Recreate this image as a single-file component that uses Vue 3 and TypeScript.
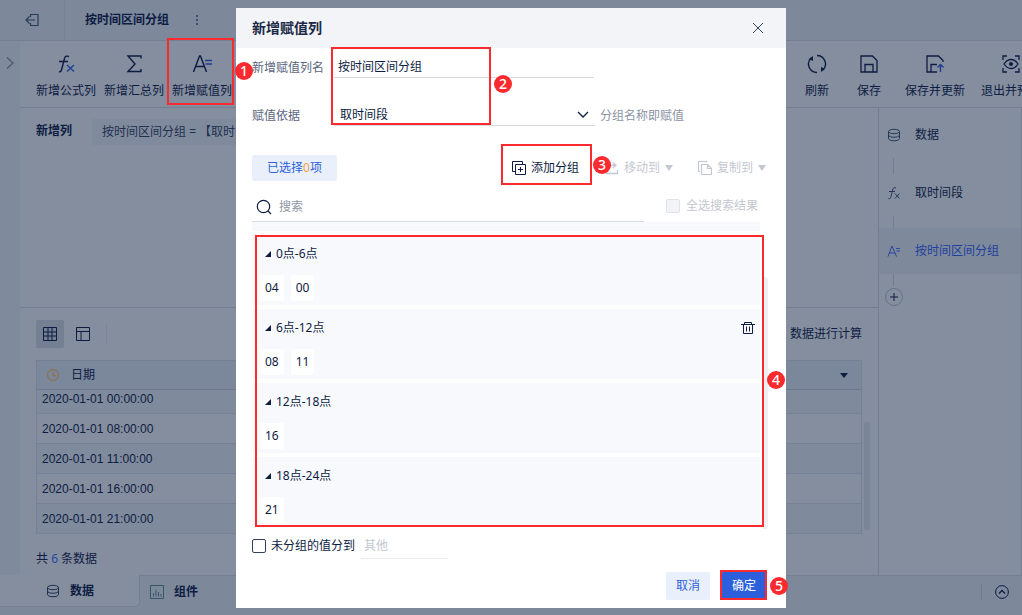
<script setup lang="ts">
import { ref } from 'vue'

interface Group {
  name: string
  values: string[]
  active?: boolean
}

const columnName = ref('按时间区间分组')
const basis = ref('取时间段')
const keyword = ref('')
const otherOn = ref(false)
const otherName = ref('')

const groups: Group[] = [
  { name: '0点-6点', values: ['04', '00'] },
  { name: '6点-12点', values: ['08', '11'], active: true },
  { name: '12点-18点', values: ['16'] },
  { name: '18点-24点', values: ['21'] },
]

const dates: string[] = [
  '2020-01-01 00:00:00',
  '2020-01-01 08:00:00',
  '2020-01-01 11:00:00',
  '2020-01-01 16:00:00',
  '2020-01-01 21:00:00',
]
</script>

<template>
  <div class="app">
    <header class="topbar">
      <button class="back" aria-label="返回">
        <svg width="14" height="14" viewBox="0 0 14 14"><path d="M5.500 4V1.500h7.500v11H5.500V10M1 7h9M4.500 3.500L1 7l3.500 3.500" stroke-width="1.200" /></svg>
      </button>
      <h1>按时间区间分组</h1>
      <button class="more" aria-label="更多">
        <svg width="4" height="12" viewBox="0 0 4 12"><path d="M1 2h2M1 6h2M1 10h2" stroke-width="1.600" /></svg>
      </button>
    </header>

    <div class="middle">
      <aside class="rail">
        <button aria-label="展开">
          <svg width="8" height="14" viewBox="0 0 8 14"><path d="M1 1.500L7 7l-6 5.500" stroke-width="1.200" /></svg>
        </button>
      </aside>
      <div class="work">
        <nav class="tools">
          <button>
            <svg width="20" height="20" viewBox="0 0 20 20"><path d="M13 2.500c-3-1-4 0-4.500 2L5.500 16c-.4 1.600-1 2-2.500 1.700M3 7.500h9" stroke-width="1.400" /><path class="accent" d="M11 11l7 6.500M18 11l-7 6.500" stroke-width="1.300" /></svg>
            <span>新增公式列</span>
          </button>
          <button>
            <svg width="20" height="20" viewBox="0 0 20 20"><path d="M17 4.500V2H4l7 8-7 7.500h13V15" stroke-width="1.400" /></svg>
            <span>新增汇总列</span>
          </button>
          <button>
            <svg width="20" height="20" viewBox="0 0 20 20"><path d="M1.500 18L7.500 2h1L14.500 18M4 12.500h8" stroke-width="1.400" /><path class="accent" d="M13 6.500h7M13.500 10H20" stroke-width="1.400" /></svg>
            <span>新增赋值列</span>
          </button>
          <div class="right-tools">
            <button>
              <svg width="20" height="20" viewBox="0 0 20 20"><path d="M10 1.500A8.500 8.500 0 0 1 16 16M10 18.500A8.500 8.500 0 0 1 4 4" stroke-width="1.400" /><path class="solid" d="M6 2v5L2 5zM14 18v-5l4 2z" /></svg>
              <span>刷新</span>
            </button>
            <button>
              <svg width="20" height="20" viewBox="0 0 20 20"><path d="M2 2h11.500L18 6.500V18H2zM6 18v-7.500h8V18" stroke-width="1.300" /></svg>
              <span>保存</span>
            </button>
            <button class="wide">
              <svg width="20" height="20" viewBox="0 0 20 20"><path d="M18 8V6.500L13.500 2H2v16h10M6 18v-7.500h6" stroke-width="1.300" /><path class="accent" d="M15.500 18v-7M12.500 13.500l3-3 3 3" stroke-width="1.400" /></svg>
              <span>保存并更新</span>
            </button>
            <button>
              <svg width="20" height="20" viewBox="0 0 20 20"><path d="M2 6V2h4M14 2h4v4M18 14v4h-4M6 18H2v-4M3 10c4-6 10-6 14 0-4 6-10 6-14 0z" stroke-width="1.300" /><circle cx="10" cy="10" r="2" class="solid" /></svg>
              <span>退出并预览</span>
            </button>
          </div>
        </nav>
        <div class="columns">
          <main>
            <section class="formula">
              <strong>新增列</strong>
              <span class="chip">按时间区间分组 = 【取时间段】</span>
            </section>
            <section class="preview">
              <div class="view-row">
                <button class="on" aria-label="明细表">
                  <svg width="16" height="16" viewBox="0 0 16 16"><path d="M1.500 1.500h13v13h-13zM1.500 6h13M1.500 10h13M6 1.500v13M10 1.500v13" /></svg>
                </button>
                <button aria-label="布局">
                  <svg width="16" height="16" viewBox="0 0 16 16"><path d="M1.500 1.500h13v13h-13zM1.500 5.500h13M6 5.500v9" /></svg>
                </button>
                <i class="sep"></i>
                <span class="calc">数据进行计算</span>
              </div>
              <div class="table-wrap">
                <table>
                  <thead>
                    <tr>
                      <th>
                        <div>
                          <svg class="clock" width="14" height="14" viewBox="0 0 14 14"><circle cx="7" cy="7" r="5.500" /><path d="M7 4v3.500h3" /></svg>
                          <span>日期</span>
                          <svg class="caret" width="8" height="5" viewBox="0 0 8 5"><path d="M0 0h8L4 5z" /></svg>
                        </div>
                      </th>
                    </tr>
                  </thead>
                  <tbody>
                    <tr v-for="d in dates" :key="d"><td>{{ d }}</td></tr>
                  </tbody>
                </table>
                <i class="page-scroll"></i>
              </div>
              <p class="count">共 <b>6</b> 条数据</p>
            </section>
          </main>
          <aside class="steps">
            <div class="step">
              <svg width="14" height="14" viewBox="0 0 14 14"><ellipse cx="7" cy="3.500" rx="5.500" ry="2.200" /><path d="M1.500 3.500v7c0 3 11 3 11 0v-7M1.500 7c0 3 11 3 11 0" /></svg>
              <span>数据</span>
            </div>
            <i class="link long"></i>
            <div class="step">
              <svg width="14" height="14" viewBox="0 0 14 14"><path d="M9 2C6.500 1 6 2.500 5.700 4L4 10.500C3.500 12.500 3 13 1.500 12.500M2 5.500h6M8 7.500l4.500 5M12.500 7.500l-4.500 5" /></svg>
              <span>取时间段</span>
            </div>
            <i class="link"></i>
            <div class="step current">
              <svg width="14" height="14" viewBox="0 0 14 14"><path d="M1 12.500L5 2l4.500 10.500M2.500 9H8M9 4.500h4M9.500 7H13" /></svg>
              <span>按时间区间分组</span>
            </div>
            <i class="link"></i>
            <button class="plus" aria-label="添加步骤">
              <svg width="10" height="10" viewBox="0 0 10 10"><path d="M5 1v8M1 5h8" /></svg>
            </button>
          </aside>
        </div>
      </div>
    </div>

    <footer class="bottom">
      <button class="tab selected">
        <svg width="14" height="14" viewBox="0 0 14 14"><ellipse cx="7" cy="3.500" rx="5.500" ry="2.200" /><path d="M1.500 3.500v7c0 3 11 3 11 0v-7M1.500 7c0 3 11 3 11 0" /></svg>
        <span>数据</span>
      </button>
      <button class="tab">
        <svg class="chart" width="14" height="14" viewBox="0 0 14 14"><path d="M.5.5h13v13H.5zM3.500 11.500V8M6 11.500V5M8.500 11.500V7M11 11.500V9" /></svg>
        <span>组件</span>
      </button>
      <div class="collapse">
        <button aria-label="收起">
          <svg width="14" height="14" viewBox="0 0 14 14"><circle cx="7" cy="7" r="6.400" /><path d="M4 8.500l3-3 3 3" stroke-width="1.300" /></svg>
        </button>
      </div>
    </footer>

    <div class="mark m1"></div>
    <span class="badge b1">1</span>

    <div class="backdrop">
      <div class="dialog" role="dialog" aria-labelledby="dialog-title">
        <div class="dialog-head">
          <h2 id="dialog-title">新增赋值列</h2>
          <button aria-label="关闭">
            <svg width="12" height="12" viewBox="0 0 12 12"><path d="M1 1l10 10M11 1L1 11" /></svg>
          </button>
        </div>
        <form class="dialog-body" @submit.prevent>
          <div class="field">
            <label for="col-name">新增赋值列名</label>
            <input id="col-name" v-model="columnName" type="text" />
          </div>
          <div class="field">
            <label for="basis">赋值依据</label>
            <div class="select">
              <select id="basis" v-model="basis"><option>取时间段</option></select>
              <svg width="12" height="8" viewBox="0 0 12 8"><path d="M1 1l5 5 5-5" stroke-width="1.300" /></svg>
            </div>
            <span class="hint">分组名称即赋值</span>
          </div>
          <div class="actions">
            <span class="selected-count">已选择<em>0</em>项</span>
            <button type="button" class="add">
              <svg width="14" height="14" viewBox="0 0 14 14"><path d="M3.500 3.500h10v10h-10zM3.500 10.500h-3v-10h10v3M8.500 6v5M6 8.500h5" /></svg>
              添加分组
            </button>
            <button type="button" class="off move" disabled>
              <svg width="14" height="14" viewBox="0 0 14 14"><path d="M1.500 7v5.500h11V9M4 9c0-3 2-5 6-5M7.500 1.500L11 4 8 7" stroke-width="1.300" /></svg>
              移动到
              <svg class="tri" width="8" height="6" viewBox="0 0 8 6"><path d="M0 0h8L4 6z" /></svg>
            </button>
            <button type="button" class="off" disabled>
              <svg width="14" height="14" viewBox="0 0 14 14"><path d="M3.500 3.500h6l4 4v6h-10zM9.500 3.500v4h4M2 10.500H.5V.5h8v1" stroke-width="1.200" /></svg>
              复制到
              <svg class="tri" width="8" height="6" viewBox="0 0 8 6"><path d="M0 0h8L4 6z" /></svg>
            </button>
          </div>
          <div class="search-row">
            <div class="search">
              <svg width="16" height="16" viewBox="0 0 16 16"><circle cx="7.500" cy="7.500" r="6.200" stroke-width="1.200" /><path d="M12 12l3 3" stroke-width="1.200" /></svg>
              <input v-model="keyword" type="text" placeholder="搜索" aria-label="搜索" />
            </div>
            <label class="pick-all"><input type="checkbox" disabled /><span>全选搜索结果</span></label>
          </div>
          <div class="list">
            <div class="tail"></div>
            <section v-for="g in groups" :key="g.name" class="group">
              <header>
                <svg width="6" height="6" viewBox="0 0 6 6"><path d="M6 0v6H0z" /></svg>
                <span>{{ g.name }}</span>
                <button v-if="g.active" type="button" aria-label="删除">
                  <svg width="14" height="14" viewBox="0 0 14 14"><path d="M0 3.500h14M3.500 3.500v-2h7v2M2.500 3.500v9h9v-9M5.500 5.500v5M8.500 5.500v5" /></svg>
                </button>
              </header>
              <div class="values"><span v-for="v in g.values" :key="v">{{ v }}</span></div>
            </section>
          </div>
          <div class="other">
            <label><input v-model="otherOn" type="checkbox" /><span>未分组的值分到</span></label>
            <input v-model="otherName" type="text" placeholder="其他" aria-label="其他分组名" />
          </div>
          <div class="buttons">
            <button type="button" class="cancel">取消</button>
            <button type="submit" class="ok">确定</button>
          </div>
        </form>
        <i class="list-scroll"></i>
        <div class="mark m2"></div>
        <div class="mark m3"></div>
        <div class="mark m4"></div>
        <div class="mark m5"></div>
        <span class="badge b2">2</span>
        <span class="badge b3">3</span>
        <span class="badge b4">4</span>
        <span class="badge b5">5</span>
      </div>
    </div>
  </div>
</template>

<style>
body {
  margin: 0;
}
</style>

<style scoped>
* {
  box-sizing: border-box;
}
.app {
  --page: #858e9e;
  --bar: #7d889b;
  --line: #737f91;
  --ink: #0d1c43;
  position: relative;
  display: flex;
  flex-direction: column;
  min-height: 100vh;
  overflow: hidden;
  padding-bottom: 8px;
  background: var(--bar);
  color: var(--ink);
  font: 12px/18px "Noto Sans", "Noto Sans CJK SC", sans-serif;
}
button, input, select {
  font: inherit;
  color: inherit;
  border: 0;
  padding: 0;
  margin: 0;
  background: none;
  border-radius: 0;
}
input:focus, select:focus {
  outline: none;
}
svg {
  display: block;
  flex: none;
  fill: none;
  stroke: currentColor;
}
svg .solid {
  fill: currentColor;
  stroke: none;
}
svg .accent {
  stroke: #1e3f8f;
}
h1, h2, p {
  margin: 0;
  font-size: 12px;
}
.topbar {
  display: flex;
  align-items: center;
  height: 41px;
  border-bottom: 1px solid var(--line);
}
.back {
  display: flex;
  align-items: center;
  justify-content: center;
  width: 65px;
  height: 40px;
  border-right: 1px solid #778396;
  color: #2b3a5a;
}
.topbar h1 {
  margin: 0 26px 0 20px;
}
.more {
  color: #2b3a5a;
}
.middle {
  display: flex;
  flex: 1;
}
.rail {
  width: 20px;
  padding-top: 15px;
  background: #7f8a9c;
}
.rail button {
  padding-left: 6px;
  color: #4b5870;
}
.work {
  flex: 1;
  min-width: 0;
  display: flex;
  flex-direction: column;
  background: var(--page);
}
.tools {
  display: flex;
  gap: 8px;
  height: 67px;
  padding: 13px 0 0 16px;
  border-bottom: 1px solid var(--line);
  overflow: hidden;
}
.tools button {
  display: flex;
  flex-direction: column;
  align-items: center;
  justify-content: flex-start;
  gap: 8px;
  flex: none;
}
.right-tools {
  display: flex;
  margin-left: auto;
  margin-right: -27px;
}
.right-tools button {
  min-width: 52px;
  padding: 0 8px;
}
.right-tools .wide {
  margin-left: 2px;
}
.columns {
  display: flex;
  flex: 1;
}
main {
  flex: 1;
  min-width: 0;
}
.formula {
  display: flex;
  align-items: flex-start;
  gap: 20px;
  height: 200px;
  padding: 11px 16px;
  border-bottom: 1px solid var(--line);
}
.formula strong {
  line-height: 24px;
}
.chip {
  padding: 4px 10px;
  background: #7f8b9c;
  color: #1f3050;
}
.preview {
  padding: 12px 16px 0;
}
.view-row {
  display: flex;
  align-items: center;
  height: 28px;
}
.view-row button {
  display: flex;
  align-items: center;
  justify-content: center;
  width: 28px;
  height: 28px;
  margin-right: 5px;
  border-radius: 2px;
}
.view-row .on {
  background: #747f91;
}
.sep {
  width: 1px;
  height: 20px;
  margin-left: 4px;
  background: #7a8597;
}
.calc {
  margin-left: auto;
}
.table-wrap {
  position: relative;
  margin-top: 12px;
}
table {
  width: 100%;
  border-collapse: separate;
  border-spacing: 0;
  border: solid #758194;
  border-width: 1px 1px 0;
}
th {
  height: 29px;
  padding: 0 13px 0 9px;
  background: #7b879a;
  border-bottom: 1px solid #6c788b;
  font-weight: 400;
}
th div {
  display: flex;
  align-items: center;
}
.clock {
  margin-right: 11px;
  color: #8e7355;
  stroke-width: 1.3;
}
.caret {
  margin-left: auto;
  fill: var(--ink);
  stroke: none;
}
td {
  height: 30px;
  padding: 0 5px;
  border-bottom: 1px solid #758194;
  font-family: "Liberation Sans", "Noto Sans CJK SC", sans-serif;
}
tbody tr:first-child td {
  height: 24px;
  vertical-align: top;
}
tbody tr:nth-child(odd) {
  background: #7f8a9c;
}
.page-scroll {
  position: absolute;
  top: 62px;
  right: -8px;
  bottom: 4px;
  width: 6px;
  border-radius: 3px;
  background: #7a8597;
}
.count {
  margin-top: 16px;
}
.count b {
  font-weight: 400;
  color: #2545a5;
}
.steps {
  width: 144px;
  padding-top: 4px;
  border: solid var(--line);
  border-width: 0 1px;
}
.step {
  display: flex;
  align-items: center;
  gap: 14px;
  height: 46px;
  padding-left: 8px;
  white-space: nowrap;
}
.step svg {
  color: #26385a;
}
.step.current {
  background: #7e899b;
  color: #1f409d;
}
.step.current svg {
  color: #2a469d;
}
.link {
  display: block;
  width: 1px;
  height: 12px;
  margin-left: 14px;
  background: var(--line);
}
.link.long {
  height: 16px;
  margin-bottom: -4px;
}
.plus {
  display: flex;
  align-items: center;
  justify-content: center;
  width: 18px;
  height: 18px;
  margin: 2px 0 0 6px;
  border: 1px solid #66748a;
  border-radius: 50%;
}
.bottom {
  display: flex;
  height: 32px;
}
.tab {
  display: flex;
  align-items: center;
  gap: 8px;
  height: 32px;
  padding: 0 10px;
  border-top: 1px solid var(--line);
  font-weight: 700;
}
.tab span {
  padding-left: 2px;
}
.tab svg {
  color: #1f3050;
}
.tab .chart {
  color: #345767;
}
.tab.selected {
  width: 140px;
  padding-left: 46px;
  background: var(--page);
  border: solid var(--line);
  border-width: 0 1px 1px 0;
  border-bottom-right-radius: 5px;
}
.collapse {
  flex: 1;
  display: flex;
  align-items: center;
  justify-content: flex-end;
  border-top: 1px solid var(--line);
}
.collapse button {
  padding: 0 13px;
  border-left: 1px solid #6f7b8e;
}
.backdrop {
  position: absolute;
  inset: 0;
  display: flex;
  align-items: flex-start;
  justify-content: center;
  padding: 8px;
}
.dialog {
  position: relative;
  width: 550px;
  background: #fff;
}
.dialog-head {
  display: flex;
  align-items: center;
  justify-content: space-between;
  height: 40px;
  padding: 0 22px 0 16px;
  background: #f2f4f8;
}
.dialog-head h2 {
  font-size: 14px;
  line-height: 20px;
  color: #1b2947;
}
.dialog-head svg {
  color: #33415c;
}
.dialog-body {
  padding: 6px 18px 8px 16px;
}
.field {
  display: flex;
  height: 24px;
  margin-bottom: 24px;
}
.field label {
  width: 82px;
  line-height: 28px;
  color: #5a667e;
}
.field input {
  width: 260px;
  padding: 2px 4px 0;
  border-bottom: 1px solid #d8dadf;
}
.select {
  position: relative;
  width: 261px;
  border-bottom: 1px solid #d8dadf;
}
.select select {
  width: 100%;
  height: 24px;
  padding: 2px 0 0 6px;
  appearance: none;
}
.select svg {
  position: absolute;
  right: 6px;
  top: 9px;
  pointer-events: none;
}
.hint {
  margin-left: 5px;
  line-height: 28px;
  color: #8b94a5;
}
.actions {
  display: flex;
  align-items: center;
  height: 26px;
  margin-top: 29px;
  padding-right: 2px;
}
.selected-count {
  width: 85px;
  line-height: 26px;
  margin-right: auto;
  text-align: center;
  border-radius: 2px;
  background: #e9effb;
  color: #2c5fdb;
}
.selected-count em {
  font-style: normal;
  color: #f7a040;
}
.actions button {
  display: flex;
  align-items: center;
  gap: 5px;
}
.actions .tri {
  fill: currentColor;
  stroke: none;
}
.actions .off {
  color: #c3c7cf;
}
.actions .add {
  margin-right: 26px;
}
.actions .move {
  margin-right: 25px;
}
.search-row {
  display: flex;
  height: 30px;
  margin-top: 11px;
}
.search {
  display: flex;
  align-items: center;
  gap: 7px;
  width: 392px;
  padding-left: 4px;
  border-bottom: 1px solid #d8dce4;
}
.search input {
  flex: 1;
  min-width: 0;
}
.search input::placeholder {
  color: #8e96a6;
  opacity: 1;
}
input[type='checkbox'] {
  appearance: none;
  width: 14px;
  height: 14px;
  border: 1px solid #33415f;
  border-radius: 2px;
}
input[type='checkbox']:checked {
  background: #2c5fdb;
}
.pick-all {
  display: flex;
  align-items: center;
  gap: 6px;
  height: 28px;
  margin-left: 22px;
  color: #c3c7cf;
}
.pick-all input[type='checkbox'] {
  border-color: #dfe3ea;
  background: #f2f4f8;
}
.list {
  display: flex;
  flex-direction: column;
  gap: 4px;
  margin-right: 8px;
}
.tail {
  height: 9px;
  background: #f7f9fd;
}
.group {
  height: 70px;
  padding: 8px;
  background: #f7f9fd;
}
.group header {
  display: flex;
  align-items: center;
  gap: 5px;
  height: 22px;
  margin-right: -8px;
  padding: 0 5px;
}
.group header > svg {
  fill: currentColor;
  stroke: none;
}
.group header button {
  margin-left: auto;
}
.values {
  display: flex;
  gap: 7px;
  margin-top: 10px;
}
.values span {
  padding: 4px 5px;
  border-radius: 2px;
  background: #fff;
}
.other {
  display: flex;
  align-items: center;
  gap: 6px;
  margin-top: 5px;
  height: 27px;
}
.other label {
  display: flex;
  align-items: center;
  gap: 5px;
}
.other input[type='text'] {
  width: 87px;
  height: 27px;
  padding: 0 3px;
  border-bottom: 1px solid #e8eaee;
}
.other input::placeholder {
  color: #c3c7cf;
  opacity: 1;
}
.buttons {
  display: flex;
  justify-content: flex-end;
  gap: 11px;
  margin-top: 13px;
  padding-right: 1px;
}
.buttons button {
  width: 46px;
  height: 28px;
  border-radius: 2px;
}
.buttons .cancel {
  width: 44px;
  background: #e9effb;
  color: #2c5fdb;
}
.buttons .ok {
  background: #2b5fdb;
  color: #fff;
}
.list-scroll {
  position: absolute;
  left: 527px;
  top: 269px;
  width: 5px;
  height: 252px;
  border-radius: 0 3px 3px 0;
  background: #eeeff3;
}
.mark {
  position: absolute;
  border: 2px solid #fb2a2e;
  pointer-events: none;
}
.badge {
  position: absolute;
  width: 18px;
  height: 18px;
  border-radius: 50%;
  background: #fb2a2e;
  color: #fff;
  text-align: center;
  font-size: 14px;
  font-weight: 500;
  line-height: 18px;
}
.m1 { left: 167px; top: 38px; width: 67px; height: 67px; }
.b1 { left: 235px; top: 62px; z-index: 2; }
.m2 { left: 95px; top: 39px; width: 160px; height: 78px; }
.m3 { left: 265px; top: 136px; width: 91px; height: 41px; }
.m4 { left: 19px; top: 227px; width: 509px; height: 292px; }
.m5 { left: 484px; top: 562px; width: 47px; height: 30px; }
.b2 { left: 258px; top: 67px; }
.b3 { left: 357px; top: 148px; }
.b4 { left: 531px; top: 363px; }
.b5 { left: 534px; top: 569px; }
</style>
